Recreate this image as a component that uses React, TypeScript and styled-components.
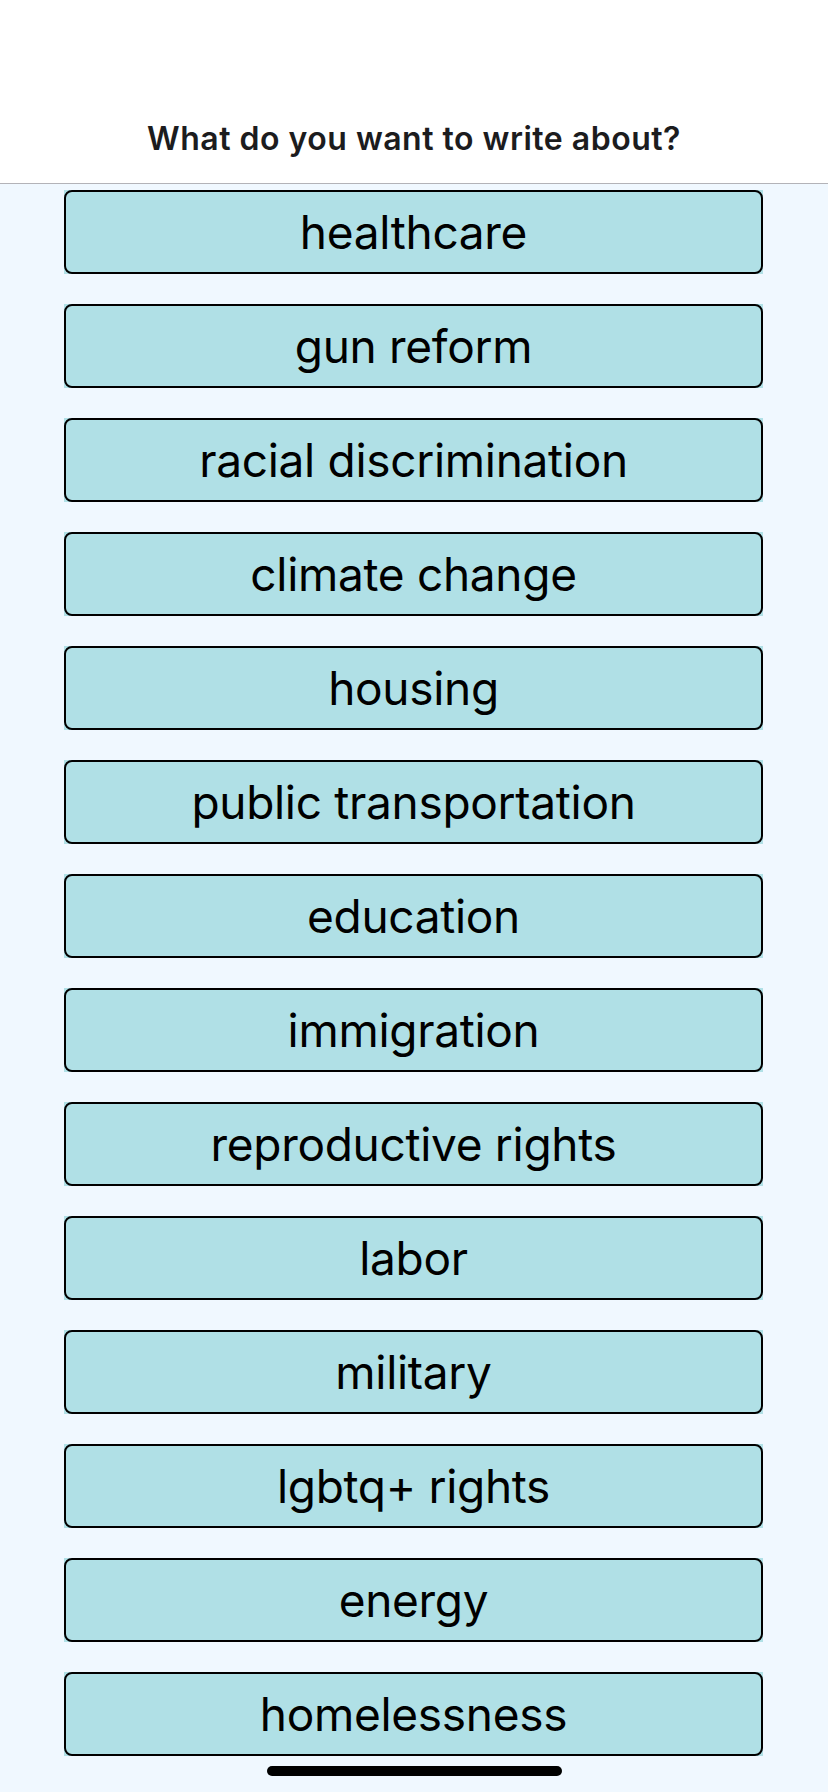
import React from 'react';
import styled, { createGlobalStyle } from 'styled-components';

const topics = [
  'healthcare',
  'gun reform',
  'racial discrimination',
  'climate change',
  'housing',
  'public transportation',
  'education',
  'immigration',
  'reproductive rights',
  'labor',
  'military',
  'lgbtq+ rights',
  'energy',
  'homelessness',
];

const GlobalStyle = createGlobalStyle`
  html, body {
    margin: 0;
    padding: 0;
    background: #f0f8ff;
  }
  body {
    font-family: Inter, "Noto Sans", "Liberation Sans", sans-serif;
  }
`;

const Screen = styled.div`
  position: relative;
  width: 828px;
  height: 1792px;
  overflow: hidden;
  background: #f0f8ff;
`;

const Header = styled.header`
  height: 184px;
  background: #ffffff;
  border-bottom: 1px solid #b3b3b8;
  display: flex;
  align-items: flex-end;
  justify-content: center;
  padding-bottom: 25px;
  box-sizing: border-box;
`;

const Title = styled.h1`
  margin: 0;
  font-size: 32px;
  font-weight: 600;
  color: #1c1c1e;
  letter-spacing: 0.5px;
`;

const List = styled.div`
  display: flex;
  flex-direction: column;
  gap: 30px;
  padding: 6px 65px 0 64px;
`;

const Item = styled.div`
  background: #b0e0e6;
`;

const TopicButton = styled.button`
  width: 100%;
  height: 84px;
  box-sizing: border-box;
  display: flex;
  align-items: center;
  justify-content: center;
  background: #b0e0e6;
  border: 2px solid #000;
  border-radius: 8px;
  font-family: Inter, "Noto Sans", "Liberation Sans", sans-serif;
  font-size: 46px;
  font-weight: 400;
  color: #000;
  letter-spacing: -0.3px;
  cursor: pointer;
  padding: 0;
`;

const HomeIndicator = styled.div`
  position: absolute;
  left: 267px;
  top: 1766px;
  width: 295px;
  height: 10px;
  border-radius: 5px;
  background: #000;
`;

const App: React.FC = () => {
  return (
    <>
      <GlobalStyle />
      <Screen>
        <Header>
          <Title>What do you want to write about?</Title>
        </Header>
        <List>
          {topics.map((t) => (
            <Item key={t}>
              <TopicButton>{t}</TopicButton>
            </Item>
          ))}
        </List>
        <HomeIndicator />
      </Screen>
    </>
  );
};

export default App;
